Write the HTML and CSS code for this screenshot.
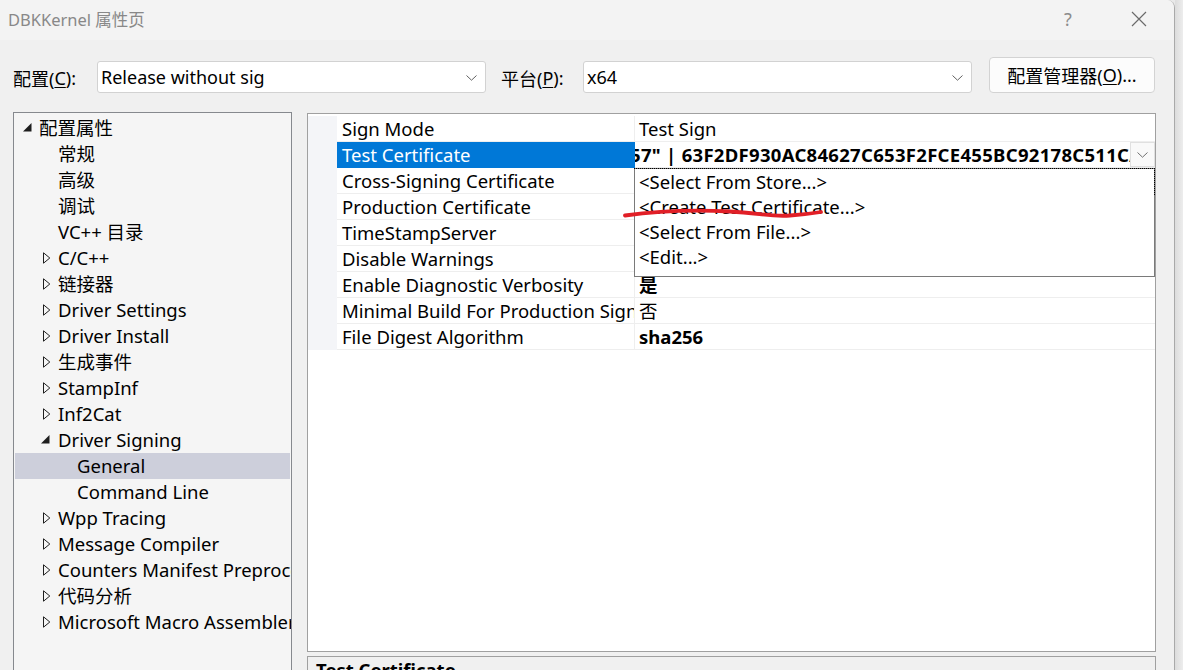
FILE: index.html
```html
<!DOCTYPE html>
<html lang="zh-CN">
<head>
<meta charset="utf-8">
<title>DBKKernel 属性页</title>
<link rel="stylesheet" href="styles.css">
</head>
<body>
<div class="window">
  <div class="titlebar">
    <span class="title">DBKKernel 属性页</span>
    <span class="help">?</span>
    <svg class="close" width="16" height="16" viewBox="0 0 16 16"><path d="M1 1 L15 15 M15 1 L1 15" stroke="#6a6a6a" stroke-width="1.2" fill="none"/></svg>
  </div>
  <div class="content">
    <div class="toprow">
      <span class="lbl">配置(<u>C</u>):</span>
      <div class="combo"><span>Release without sig</span><svg class="chev" width="11" height="6" viewBox="0 0 11 6"><path d="M0.5 0.5 L5.5 5.2 L10.5 0.5" stroke="#606060" fill="none"/></svg></div>
      <span class="lbl lbl2">平台(<u>P</u>):</span>
      <div class="combo"><span>x64</span><svg class="chev" width="11" height="6" viewBox="0 0 11 6"><path d="M0.5 0.5 L5.5 5.2 L10.5 0.5" stroke="#606060" fill="none"/></svg></div>
      <div class="btn">配置管理器(<u>O</u>)...</div>
    </div>
    <div class="main">
      <div class="tree">
        <div class="trow l0"><span class="tw"><svg class="exp" width="9" height="9" viewBox="0 0 9 9"><path d="M8.5 0 L8.5 8.5 L0 8.5 Z" fill="#1e1e1e"/></svg></span><span>配置属性</span></div>
        <div class="trow l1"><span class="tw"></span><span>常规</span></div>
        <div class="trow l1"><span class="tw"></span><span>高级</span></div>
        <div class="trow l1"><span class="tw"></span><span>调试</span></div>
        <div class="trow l1"><span class="tw"></span><span>VC++ 目录</span></div>
        <div class="trow l1"><span class="tw"><svg class="col" width="8" height="12" viewBox="0 0 8 12"><path d="M0.5 0.8 L6.8 6 L0.5 11.2 Z" fill="none" stroke="#1e1e1e"/></svg></span><span>C/C++</span></div>
        <div class="trow l1"><span class="tw"><svg class="col" width="8" height="12" viewBox="0 0 8 12"><path d="M0.5 0.8 L6.8 6 L0.5 11.2 Z" fill="none" stroke="#1e1e1e"/></svg></span><span>链接器</span></div>
        <div class="trow l1"><span class="tw"><svg class="col" width="8" height="12" viewBox="0 0 8 12"><path d="M0.5 0.8 L6.8 6 L0.5 11.2 Z" fill="none" stroke="#1e1e1e"/></svg></span><span>Driver Settings</span></div>
        <div class="trow l1"><span class="tw"><svg class="col" width="8" height="12" viewBox="0 0 8 12"><path d="M0.5 0.8 L6.8 6 L0.5 11.2 Z" fill="none" stroke="#1e1e1e"/></svg></span><span>Driver Install</span></div>
        <div class="trow l1"><span class="tw"><svg class="col" width="8" height="12" viewBox="0 0 8 12"><path d="M0.5 0.8 L6.8 6 L0.5 11.2 Z" fill="none" stroke="#1e1e1e"/></svg></span><span>生成事件</span></div>
        <div class="trow l1"><span class="tw"><svg class="col" width="8" height="12" viewBox="0 0 8 12"><path d="M0.5 0.8 L6.8 6 L0.5 11.2 Z" fill="none" stroke="#1e1e1e"/></svg></span><span>StampInf</span></div>
        <div class="trow l1"><span class="tw"><svg class="col" width="8" height="12" viewBox="0 0 8 12"><path d="M0.5 0.8 L6.8 6 L0.5 11.2 Z" fill="none" stroke="#1e1e1e"/></svg></span><span>Inf2Cat</span></div>
        <div class="trow l1"><span class="tw"><svg class="exp exp1" width="9" height="9" viewBox="0 0 9 9"><path d="M8.5 0 L8.5 8.5 L0 8.5 Z" fill="#1e1e1e"/></svg></span><span>Driver Signing</span></div>
        <div class="trow l2 sel"><span class="tw"></span><span>General</span></div>
        <div class="trow l2"><span class="tw"></span><span>Command Line</span></div>
        <div class="trow l1"><span class="tw"><svg class="col" width="8" height="12" viewBox="0 0 8 12"><path d="M0.5 0.8 L6.8 6 L0.5 11.2 Z" fill="none" stroke="#1e1e1e"/></svg></span><span>Wpp Tracing</span></div>
        <div class="trow l1"><span class="tw"><svg class="col" width="8" height="12" viewBox="0 0 8 12"><path d="M0.5 0.8 L6.8 6 L0.5 11.2 Z" fill="none" stroke="#1e1e1e"/></svg></span><span>Message Compiler</span></div>
        <div class="trow l1"><span class="tw"><svg class="col" width="8" height="12" viewBox="0 0 8 12"><path d="M0.5 0.8 L6.8 6 L0.5 11.2 Z" fill="none" stroke="#1e1e1e"/></svg></span><span>Counters Manifest Preprocessor</span></div>
        <div class="trow l1"><span class="tw"><svg class="col" width="8" height="12" viewBox="0 0 8 12"><path d="M0.5 0.8 L6.8 6 L0.5 11.2 Z" fill="none" stroke="#1e1e1e"/></svg></span><span>代码分析</span></div>
        <div class="trow l1"><span class="tw"><svg class="col" width="8" height="12" viewBox="0 0 8 12"><path d="M0.5 0.8 L6.8 6 L0.5 11.2 Z" fill="none" stroke="#1e1e1e"/></svg></span><span>Microsoft Macro Assembler</span></div>
      </div>
      <div class="right">
        <div class="grid">
          <div class="prow"><span class="gut"></span><span class="pname">Sign Mode</span><span class="pval">Test Sign</span></div>
          <div class="prow"><span class="gut"></span><span class="pname psel">Test Certificate</span><span class="pval edit">
            <span class="clip"><span class="scroll">57" | 63F2DF930AC84627C653F2FCE455BC92178C511CA</span></span>
            <span class="ddbtn"><svg width="11" height="6" viewBox="0 0 11 6"><path d="M0.5 0.5 L5.5 5.2 L10.5 0.5" stroke="#707070" fill="none"/></svg></span>
            <div class="list">
              <div class="item focus">&lt;Select From Store...&gt;</div>
              <div class="item">&lt;Create Test Certificate...&gt;</div>
              <div class="item">&lt;Select From File...&gt;</div>
              <div class="item">&lt;Edit...&gt;</div>
            </div>
          </span></div>
          <div class="prow"><span class="gut"></span><span class="pname">Cross-Signing Certificate</span><span class="pval"></span></div>
          <div class="prow"><span class="gut"></span><span class="pname">Production Certificate</span><span class="pval"></span></div>
          <div class="prow"><span class="gut"></span><span class="pname">TimeStampServer</span><span class="pval"></span></div>
          <div class="prow"><span class="gut"></span><span class="pname">Disable Warnings</span><span class="pval"></span></div>
          <div class="prow"><span class="gut"></span><span class="pname">Enable Diagnostic Verbosity</span><span class="pval b">是</span></div>
          <div class="prow"><span class="gut"></span><span class="pname">Minimal Build For Production Signing</span><span class="pval">否</span></div>
          <div class="prow"><span class="gut"></span><span class="pname">File Digest Algorithm</span><span class="pval b">sha256</span></div>
        </div>
        <div class="desc"><b>Test Certificate</b></div>
      </div>
    </div>
  </div>
</div>
<div class="edge"></div>
<svg class="mark" width="1183" height="670" viewBox="0 0 1183 670"><path d="M625 215.5 C 650 212, 690 209.5, 730 211.5 C 760 213, 770 217, 790 215.5 C 805 214.5, 815 213, 821 212" stroke="#e11f27" stroke-width="3.8" fill="none" stroke-linecap="round"/></svg>
</body>
</html>
```

FILE: styles.css
```css
html, body {
  margin: 0;
  padding: 0;
}
body {
  width: 1183px;
  height: 670px;
  overflow: hidden;
  display: flex;
  background: #e9e9e9;
  font-family: "Noto Sans", "Noto Sans CJK SC", sans-serif;
  font-size: 18.5px;
  color: #000;
  position: relative;
}
.window {
  width: 1174px;
  height: 670px;
  flex: none;
  background: #f0f0f0;
  border-right: 1px solid #a9a9a9;
  border-top-right-radius: 8px;
  overflow: hidden;
  display: flex;
  flex-direction: column;
}
.edge {
  flex: 1;
  background: linear-gradient(to right, #dcdcdc, #ededed);
}
.titlebar {
  height: 40px;
  flex: none;
  background: #f3f3f3;
  display: flex;
  align-items: center;
  padding-left: 8px;
}
.title {
  flex: 1;
  font-size: 16.5px;
  color: #888;
  margin-top: -2px;
}
.help {
  width: 10px;
  text-align: center;
  font-size: 18px;
  color: #8c8c8c;
  margin-right: 58px;
  margin-top: -3px;
}
.close {
  margin-right: 27px;
  margin-top: -2px;
}
.content {
  flex: 1;
  min-height: 0;
  padding: 0 19px 0 13px;
  display: flex;
  flex-direction: column;
}
.toprow {
  display: flex;
  align-items: flex-end;
  height: 36px;
  margin-top: 17px;
  flex: none;
}
.lbl {
  width: 84px;
  height: 31px;
  display: flex;
  align-items: center;
  font-size: 18px;
}
.lbl u, .btn u {
  text-underline-offset: 2px;
}
.lbl2 {
  margin-left: 15px;
  width: 82px;
}
.combo {
  width: 389px;
  height: 32px;
  box-sizing: border-box;
  border: 1px solid #d2d2d2;
  border-radius: 3px;
  background: #fff;
  display: flex;
  align-items: center;
  justify-content: space-between;
  padding: 0 8px 0 3px;
  font-size: 18px;
}
.chev {
  margin-top: 1px;
}
.btn {
  margin-left: 17px;
  width: 166px;
  height: 36px;
  box-sizing: border-box;
  border: 1px solid #d3d3d3;
  border-radius: 4px;
  background: #fcfcfc;
  display: flex;
  align-items: center;
  justify-content: center;
  font-size: 18px;
}
.main {
  flex: 1;
  min-height: 0;
  display: flex;
  gap: 15px;
  margin-top: 19px;
}
.tree {
  width: 279px;
  box-sizing: border-box;
  border: 1px solid #86898e;
  border-bottom: none;
  background: #f5f5f5;
  padding-top: 2px;
  overflow: hidden;
  flex: none;
}
.trow {
  height: 26px;
  line-height: 26px;
  display: flex;
  align-items: center;
  white-space: nowrap;
  margin: 0 1px;
}
.trow.l0 { padding-left: 5px; }
.trow.l1 { padding-left: 24px; }
.trow.l2 { padding-left: 43px; }
.trow.sel { background: #cdcfdb; }
.tw {
  width: 19px;
  flex: none;
  display: flex;
  align-items: center;
  height: 26px;
}
.exp {
  margin-left: 3px;
  margin-top: -1px;
}
.exp1 {
  margin-left: 2px;
  margin-top: -1px;
}
.col {
  margin-left: 4px;
}
.right {
  width: 849px;
  flex: none;
  display: flex;
  flex-direction: column;
  gap: 4px;
  margin-top: 1px;
}
.grid {
  height: 539px;
  flex: none;
  box-sizing: border-box;
  border: 1px solid #a0a0a0;
  background: #fff;
  padding-top: 2px;
}
.prow {
  display: flex;
  height: 26px;
}
.gut {
  width: 29px;
  flex: none;
  background: #f4f5f8;
}
.pname, .pval {
  box-sizing: border-box;
  height: 26px;
  line-height: 25px;
  border-bottom: 1px solid #eeeeee;
  white-space: nowrap;
  overflow: hidden;
}
.pname {
  width: 298px;
  flex: none;
  border-right: 1px solid #eeeeee;
  padding-left: 5px;
}
.pname.psel {
  background: #0078d7;
  color: #fff;
  border-right-color: #0078d7;
  border-bottom-color: #0078d7;
}
.pval {
  flex: 1;
  min-width: 0;
  padding-left: 4px;
}
.pval.b {
  font-weight: bold;
}
.pval.edit {
  position: relative;
  overflow: visible;
  padding-left: 0;
  display: flex;
}
.clip {
  flex: 1;
  min-width: 0;
  overflow: hidden;
  white-space: nowrap;
  font-weight: bold;
}
.scroll {
  display: inline-block;
  margin-left: -5px;
  letter-spacing: 0.3px;
}
.ddbtn {
  width: 25px;
  height: 25px;
  flex: none;
  box-sizing: border-box;
  border: 1px solid #e0e0e0;
  background: #f9f9f9;
  display: flex;
  align-items: center;
  justify-content: center;
}
.list {
  position: absolute;
  top: 26px;
  left: -1px;
  right: 0;
  height: 109px;
  box-sizing: border-box;
  border: 1px solid #7a7a7a;
  background: #fff;
  z-index: 2;
}
.item {
  height: 25px;
  line-height: 25px;
  padding-left: 4px;
  white-space: nowrap;
}
.item.focus {
  position: relative;
}
.item.focus::after {
  content: "";
  position: absolute;
  top: -1px;
  left: -1px;
  right: -1px;
  height: 26px;
  border-top: 1px dotted #000;
  border-right: 1px dotted #000;
}
.desc {
  flex: 1;
  box-sizing: border-box;
  border: 1px solid #a0a0a0;
  border-bottom: none;
  background: #f0f0f0;
  padding: 2px 8px 0;
  line-height: 22px;
  overflow: hidden;
}
.mark {
  position: absolute;
  left: 0;
  top: 0;
  z-index: 5;
  pointer-events: none;
}
```
